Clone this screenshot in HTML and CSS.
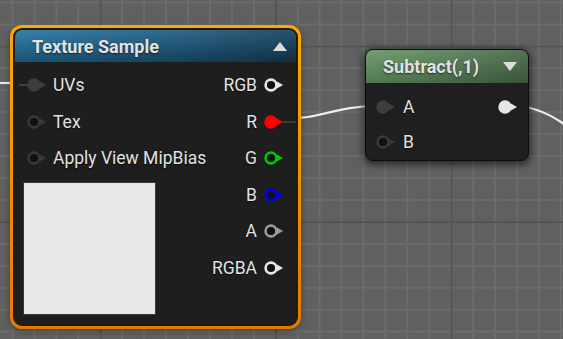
FILE: index.html
```html
<!DOCTYPE html>
<html lang="en">
<head>
    <meta charset="UTF-8">
    <title>Material graph</title>
    <link rel="stylesheet" href="styles.css">
</head>
<body>
    <div class="canvas">
        <svg class="wires" width="563" height="339" viewBox="0 0 563 339">
            <path d="M0 83 L24 83"/>
            <path d="M281 119 C322 119 335 106 377 106"/>
            <path d="M514 106 C545 106 572 126 620 172"/>
        </svg>

        <div class="node node-texture">
            <div class="node-inner">
                <div class="node-header header-blue">
                    <span class="node-title">Texture Sample</span>
                    <span class="caret caret-up"></span>
                </div>
                <div class="node-body">
                    <div class="pins-in">
                        <div class="pin-row">
                            <svg class="pin pin-filled pin-off" viewBox="0 0 20 14"><path class="stub" d="M-8 7 L2 7"/><circle cx="7" cy="7" r="5.4"/><path d="M13 3.5 L19 7 L13 10.5Z"/></svg>
                            <span class="pin-label">UVs</span>
                        </div>
                        <div class="pin-row">
                            <svg class="pin pin-empty" viewBox="0 0 20 14"><circle cx="7" cy="7" r="5.4"/><path d="M13 3.5 L19 7 L13 10.5Z"/></svg>
                            <span class="pin-label">Tex</span>
                        </div>
                        <div class="pin-row">
                            <svg class="pin pin-empty" viewBox="0 0 20 14"><circle cx="7" cy="7" r="5.4"/><path d="M13 3.5 L19 7 L13 10.5Z"/></svg>
                            <span class="pin-label">Apply View MipBias</span>
                        </div>
                        <div class="preview"></div>
                    </div>
                    <div class="pins-out">
                        <div class="pin-row">
                            <span class="pin-label">RGB</span>
                            <svg class="pin pin-white" viewBox="0 0 20 14"><circle cx="7" cy="7" r="5.4"/><path d="M13 3.5 L19 7 L13 10.5Z"/></svg>
                        </div>
                        <div class="pin-row">
                            <span class="pin-label">R</span>
                            <svg class="pin pin-red pin-filled" viewBox="0 0 20 14"><circle cx="7" cy="7" r="5.4"/><path d="M13 3.5 L19 7 L13 10.5Z"/><path class="stub stub-out" d="M19 7 L32 7"/></svg>
                        </div>
                        <div class="pin-row">
                            <span class="pin-label">G</span>
                            <svg class="pin pin-green" viewBox="0 0 20 14"><circle cx="7" cy="7" r="5.4"/><path d="M13 3.5 L19 7 L13 10.5Z"/></svg>
                        </div>
                        <div class="pin-row">
                            <span class="pin-label">B</span>
                            <svg class="pin pin-blue" viewBox="0 0 20 14"><circle cx="7" cy="7" r="5.4"/><path d="M13 3.5 L19 7 L13 10.5Z"/></svg>
                        </div>
                        <div class="pin-row">
                            <span class="pin-label">A</span>
                            <svg class="pin pin-grey" viewBox="0 0 20 14"><circle cx="7" cy="7" r="5.4"/><path d="M13 3.5 L19 7 L13 10.5Z"/></svg>
                        </div>
                        <div class="pin-row">
                            <span class="pin-label">RGBA</span>
                            <svg class="pin pin-white" viewBox="0 0 20 14"><circle cx="7" cy="7" r="5.4"/><path d="M13 3.5 L19 7 L13 10.5Z"/></svg>
                        </div>
                    </div>
                </div>
            </div>
        </div>

        <div class="node node-subtract">
            <div class="node-header header-green">
                <span class="node-title">Subtract(,1)</span>
                <span class="caret caret-down"></span>
            </div>
            <div class="node-body">
                <div class="pins-in">
                    <div class="pin-row">
                        <svg class="pin pin-filled pin-off" viewBox="0 0 20 14"><circle cx="7" cy="7" r="5.4"/><path d="M13 3.5 L19 7 L13 10.5Z"/></svg>
                        <span class="pin-label">A</span>
                    </div>
                    <div class="pin-row">
                        <svg class="pin pin-empty" viewBox="0 0 20 14"><circle cx="7" cy="7" r="5.4"/><path d="M13 3.5 L19 7 L13 10.5Z"/></svg>
                        <span class="pin-label">B</span>
                    </div>
                </div>
                <div class="pins-out">
                    <div class="pin-row">
                        <svg class="pin pin-white pin-filled" viewBox="0 0 20 14"><circle cx="7" cy="7" r="5.4"/><path d="M13 3.5 L19 7 L13 10.5Z"/></svg>
                    </div>
                </div>
            </div>
        </div>
    </div>
</body>
</html>
```

FILE: styles.css
```css
* {
    margin: 0;
    padding: 0;
    box-sizing: border-box;
}

body {
    font-family: Roboto, 'Liberation Sans', sans-serif;
    background: #5f5f5f;
}

/* graph canvas with minor / major grid lines */
.canvas {
    position: relative;
    width: 563px;
    height: 339px;
    overflow: hidden;
    background-color: #606060;
    background-image:
        linear-gradient(90deg, #545454 2px, transparent 2px),
        linear-gradient(#545454 2px, transparent 2px),
        linear-gradient(90deg, #6b6b6b 2px, transparent 2px),
        linear-gradient(#6b6b6b 2px, transparent 2px);
    background-size: 175.5px 175.5px, 175.5px 175.5px, 21.9375px 21.9375px, 21.9375px 21.9375px;
    background-position: 99.5px 0, 0 45.5px, 11.5px 0, 0 1.5px;
}

.wires {
    position: absolute;
    top: 0;
    left: 0;
}

.wires path {
    fill: none;
    stroke: #ececec;
    stroke-width: 2.2;
}

.node {
    position: absolute;
    color: #e2e2e2;
}

.node-texture {
    left: 10px;
    top: 25px;
    width: 291px;
    height: 304px;
    padding: 3px;
    border-radius: 12px;
    background: linear-gradient(#f7ab00, #e27a00);
    box-shadow: 0 2px 6px rgba(0, 0, 0, 0.35);
}

.node-texture .node-inner {
    height: 100%;
    border: 2px solid #26190a;
    border-radius: 9px;
    background: #1d1e1d;
    overflow: hidden;
}

.node-subtract {
    left: 365px;
    top: 49px;
    width: 164px;
    height: 112px;
    border: 1px solid #0d0d0d;
    border-radius: 8px;
    background: #1e1f1e;
    overflow: hidden;
    box-shadow: 0 2px 7px 2px rgba(0, 0, 0, 0.55);
}

.node-header {
    display: flex;
    align-items: center;
    justify-content: space-between;
}

.node-title {
    font-weight: bold;
    font-size: 18px;
    text-shadow: 0 1px 2px rgba(0, 0, 0, 0.6);
}

.header-blue {
    height: 32px;
    padding: 0 9px 0 17px;
    background: linear-gradient(180deg, rgba(255, 255, 255, 0.08), rgba(0, 0, 0, 0.3)),
        linear-gradient(90deg, #2677a6, #1d5c82 60%, #16435f);
}

.header-green {
    height: 33px;
    padding: 0 11px 0 17px;
    background: linear-gradient(180deg, rgba(255, 255, 255, 0.06), rgba(0, 0, 0, 0.22)),
        linear-gradient(90deg, #6b9a68, #58805a 60%, #4a6b4a);
}

.caret {
    width: 0;
    height: 0;
    border-left: 7.5px solid transparent;
    border-right: 7.5px solid transparent;
}

.caret-up {
    border-bottom: 9px solid #dcdcdc;
}

.caret-down {
    border-top: 9px solid #dcdcdc;
}

.node-body {
    display: flex;
    justify-content: space-between;
}

.node-texture .node-body {
    padding-top: 4.7px;
}

.node-subtract .node-body {
    padding-top: 6px;
}

.pin-row {
    display: flex;
    align-items: center;
    height: 36.6px;
    gap: 6px;
}

.node-subtract .pin-row {
    height: 35px;
}

.node-texture .pins-in {
    padding-left: 12px;
}

.node-texture .pins-out {
    padding-right: 12px;
}

.node-texture .pins-out .pin-row {
    justify-content: flex-end;
    gap: 7px;
}

.node-subtract .pins-in {
    padding-left: 10px;
}

.node-subtract .pins-in .pin-row {
    gap: 7px;
}

.node-subtract .pins-out {
    padding-right: 10px;
}

.pin-label {
    font-size: 17.5px;
    text-shadow: 0 1px 1px rgba(0, 0, 0, 0.7);
}

.pin {
    width: 20px;
    height: 14px;
    flex: none;
    overflow: visible;
}

.pin circle {
    fill: #111;
    stroke: currentColor;
    stroke-width: 2.6;
}

.pin path {
    fill: currentColor;
}

.pin .stub {
    fill: none;
    stroke: #3e3e3e;
    stroke-width: 2;
}

.pin .stub-out {
    stroke: #3a3a3a;
}

.pin-filled circle {
    fill: currentColor;
}

.pin-empty { color: #383838; }
.pin-off { color: #3e3e3e; }
.pin-white { color: #e6e6e6; }
.pin-red { color: #ff0000; }
.pin-green { color: #00c800; }
.pin-blue { color: #0000f0; }
.pin-grey { color: #9a9a9a; }

.preview {
    width: 133px;
    height: 133px;
    margin: 5.5px 0 0 -4px;
    background: #e8e8e8;
    border: 1px solid #3a3a3a;
}
```
